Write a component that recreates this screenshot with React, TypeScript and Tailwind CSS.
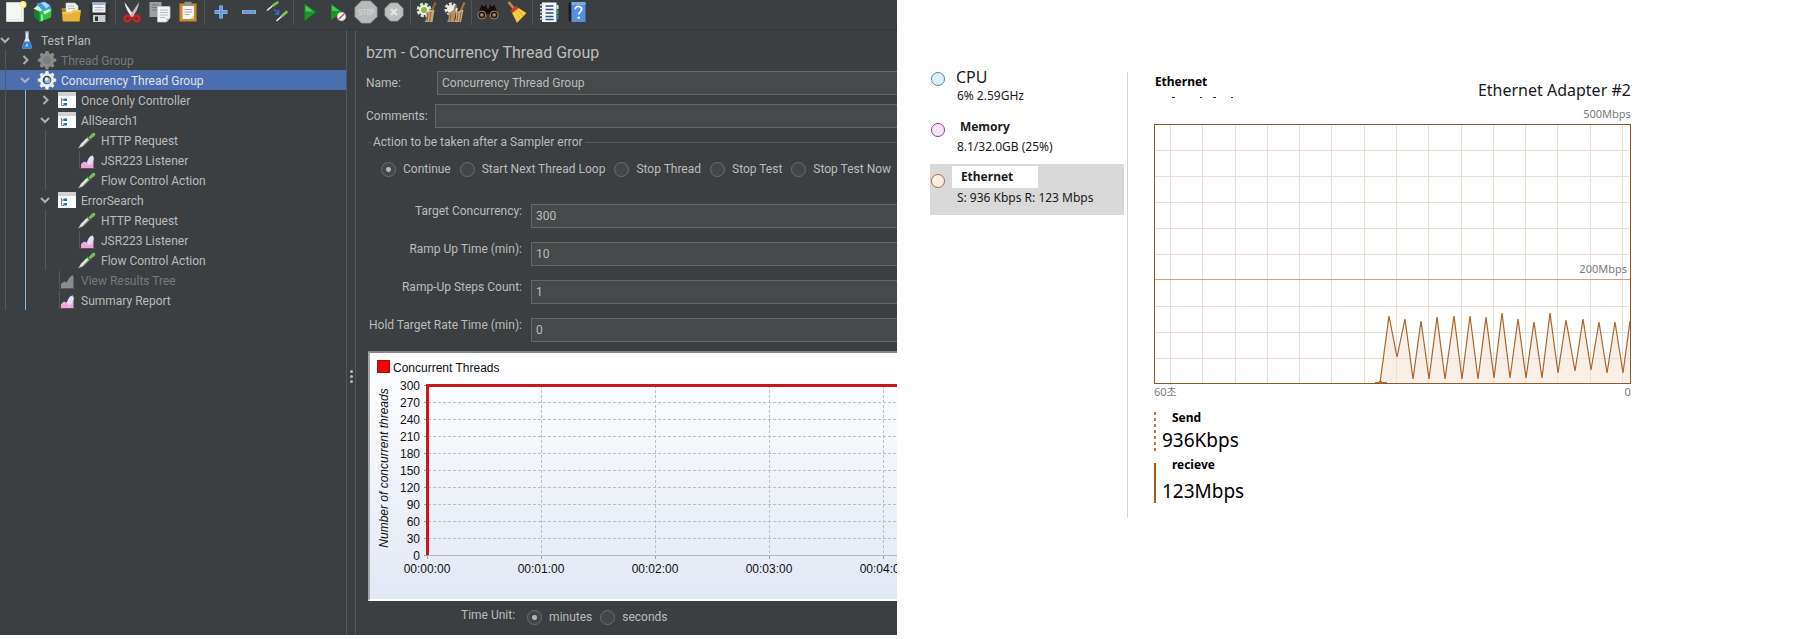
import type { ReactNode } from "react";

/* ---------- toolbar icons, all on a 24 x 24 grid ---------- */

function Icon({ children }: { children: ReactNode }) {
  return (
    <svg viewBox="0 0 24 24" className="h-6 w-6 shrink-0" aria-hidden="true">
      {children}
    </svg>
  );
}

const NewIcon = () => (
  <Icon>
    <path d="M3.500 2.500h17v19h-17z" fill="#f6f6f3" stroke="#d2d2cc" />
    <path d="M6 19.500h12.500V8" fill="none" stroke="#e4e4de" />
    <circle cx="20" cy="4.500" r="3.500" fill="#f3ee8a" />
    <circle cx="20" cy="4.500" r="1.600" fill="#fffde0" />
  </Icon>
);

const TemplatesIcon = () => (
  <Icon>
    <path d="M4.500 8.500 6 3.500 13 1.500l6 3.500 1.500 4L11 13z" fill="#3f9be0" />
    <path d="M10 3l4-1 4.500 3.500-3 3z" fill="#a5dcf8" />
    <path d="M2.500 8.500 8.500 11.500v10L3.500 18z" fill="#157f29" />
    <path d="M8.500 11.500 20.500 8l-.5 9.500-11.500 4.500z" fill="#2fc246" />
    <path d="M2.500 8.500 7 5.500l4.500 5-3 1z" fill="#d6f0da" />
    <path d="M12 11.500l6-2.500 2.500 1.500-7 4z" fill="#c8f5cf" />
    <path d="M11 14.500v6.500" stroke="#8cec98" strokeWidth="1.800" />
  </Icon>
);

const OpenIcon = () => (
  <Icon>
    <path d="M2.500 8h7l2 2H20v11H3.500z" fill="#b9801c" />
    <path d="M7 3h9l3 3v9H7z" fill="#f1f1ee" stroke="#c9c9c4" strokeWidth=".6" />
    <path d="M9 6h6M9 8.500h7" stroke="#a9a9a4" strokeWidth=".8" />
    <path d="M3 12h9l2-2h8l-1.500 11.500h-16.500z" fill="#e9b23c" />
    <path d="M4 13h8.500l2-2h6.500" fill="none" stroke="#f9dc85" strokeWidth=".9" />
  </Icon>
);

const SaveIcon = () => (
  <Icon>
    <path d="M2.500 4h19v16.500l-1 1.500H4L2.500 20.500z" fill="#303133" />
    <path d="M5.500 2.500h13v10h-13z" fill="#f0f2f4" />
    <path d="M5.500 2.500h13v2.500h-13z" fill="#9fb6cc" />
    <path d="M7.500 7.500h9M7.500 10h9" stroke="#b3b6ba" />
    <path d="M6 15h12.500v7H6z" fill="#c9cbce" />
    <path d="M8 16.500h3v4.500H8z" fill="#303133" />
  </Icon>
);

const CutIcon = () => (
  <Icon>
    <path d="M4.500 2 14 15.500l-2.500 1.500C8 12 5.500 8 4.500 2z" fill="#eceeef" />
    <path d="M19 2 10 15.500l2.500 1.500C16 12 18.500 8 19 2z" fill="#b9bdc0" />
    <ellipse cx="7.500" cy="18.500" rx="3" ry="2.700" fill="none" stroke="#d81f1f" strokeWidth="2.400" />
    <ellipse cx="16.500" cy="18.500" rx="3" ry="2.700" fill="none" stroke="#d81f1f" strokeWidth="2.400" />
  </Icon>
);

const CopyIcon = () => (
  <Icon>
    <path d="M1.500 2h12v15h-12z" fill="#9c9e9f" />
    <path d="M4 5h7M4 7.500h7M4 10h7" stroke="#77797a" />
    <path d="M9.500 6.500h12.500V18l-3.500 4h-9z" fill="#f2f3f3" stroke="#c4c6c7" strokeWidth=".7" />
    <path d="M12 10h8M12 12.500h8M12 15h8M12 17.500h5" stroke="#b3b6b8" strokeWidth=".9" />
    <path d="M18.500 22v-4H22z" fill="#c4c6c7" />
  </Icon>
);

const PasteIcon = () => (
  <Icon>
    <path d="M3.500 3.500h17v18h-17z" fill="#c58a32" stroke="#8f5f1a" strokeWidth=".8" />
    <path d="M6.500 6h11.500v13h-11.500z" fill="#f4f4f2" />
    <path d="M8.500 1.800h7V6h-7z" fill="#8f9294" />
    <path d="M8.500 9.500h7.500M8.500 12h7.500M8.500 14.500h5" stroke="#a9abad" />
    <path d="M14 19l4-4v4z" fill="#cfcfcc" />
  </Icon>
);

const PlusIcon = () => (
  <Icon>
    <path d="M12 5.500v13M5.500 12h13" stroke="#a9d0f7" strokeWidth="3.400" />
    <path d="M12 6v12M6 12h12" stroke="#5b9de6" strokeWidth="2" />
  </Icon>
);

const MinusIcon = () => (
  <Icon>
    <path d="M5 12h14" stroke="#a9d0f7" strokeWidth="3.400" />
    <path d="M5.500 12h13" stroke="#5b9de6" strokeWidth="2" />
  </Icon>
);

const ToggleIcon = () => (
  <Icon>
    <path d="M2.500 10 8 5.500" stroke="#f0f3ee" strokeWidth="1.600" strokeLinecap="round" />
    <path d="M8 5.500 12.500 2.500" stroke="#7fc45a" strokeWidth="2.600" strokeLinecap="round" />
    <path d="M12 20.500 17 16" stroke="#f0f3ee" strokeWidth="1.600" strokeLinecap="round" />
    <path d="M17 16l4.500-4" stroke="#7fc45a" strokeWidth="2.600" strokeLinecap="round" />
    <path d="M9 9l4 4M13.500 9.500V14H9.500" fill="none" stroke="#2f6fd0" strokeWidth="1.400" />
  </Icon>
);

const PlayIcon = () => (
  <Icon>
    <path d="M6.500 3.500 18 12 6.500 21z" fill="#1a9425" />
    <path d="M7.500 5.500 15.500 11.500H7.500z" fill="#45c94e" />
  </Icon>
);

const PlayNoPauseIcon = () => (
  <Icon>
    <path d="M5 3.500 16 12 5 20z" fill="#1a9425" />
    <path d="M6 5.500 13.500 11H6z" fill="#45c94e" />
    <circle cx="15.500" cy="16.500" r="4.300" fill="#f3efef" stroke="#bdb7b7" strokeWidth=".8" />
    <path d="M12.800 19l5.400-5" stroke="#c24848" strokeWidth="1.500" />
  </Icon>
);

const StopIcon = () => (
  <Icon>
    <path d="M7.500 1h9L23 7.500v9L16.500 23h-9L1 16.500v-9z" fill="#b9bbbb" stroke="#9fa1a1" strokeWidth=".8" />
    <path d="M5 9.500h3.200M5 9.500v2.500h3v2.500H5M10.500 9.500v5M9.300 9.500h2.600M13 9.500h2.700v5H13zM17.300 14.500v-5h2.200v2.700h-2.200" fill="none" stroke="#cfd1d1" />
  </Icon>
);

const ShutdownIcon = () => (
  <Icon>
    <path d="M8.500 3h7l5.500 5.500v7L15.500 21h-7L3 15.500v-7z" fill="#bdbfbf" stroke="#a4a6a6" strokeWidth=".8" />
    <path d="M9 9l6 6M15 9l-6 6" stroke="#e4e5e5" strokeWidth="2.200" />
  </Icon>
);

const ClearIcon = () => (
  <Icon>
    <circle cx="9" cy="10" r="5.800" fill="none" stroke="#d7e6c8" strokeWidth="3.200" strokeDasharray="3 1.550" />
    <circle cx="9" cy="10" r="5" fill="#eef3e6" />
    <circle cx="9" cy="10" r="3" fill="#86b84c" />
    <path d="M20.500 2.500 17 10" stroke="#9c6b35" strokeWidth="1.800" />
    <path d="M10.500 12c3 1 5-3.500 9-2l-2 12H9.500c3-3 2.500-6 1-10z" fill="#caa172" />
    <path d="M13 13l-1 8M16 12l-1.500 9.500" stroke="#8d653a" />
  </Icon>
);

const ClearAllIcon = () => (
  <Icon>
    <circle cx="8" cy="9" r="5" fill="none" stroke="#e3e3dc" strokeWidth="3.200" strokeDasharray="2.800 1.400" />
    <circle cx="8" cy="9" r="4" fill="#ecece4" />
    <path d="M21.500 2.500 18 10M13 5l-2 6" stroke="#a77a48" strokeWidth="1.800" />
    <path d="M5 12c3 1 5-3 8-1.500L11 22H4c2.500-3 2-7 1-10z" fill="#b98e60" />
    <path d="M12.500 12c3 1 4-3.500 8-2L18 22h-7c2.500-3 2.500-6 1.500-10z" fill="#cfa87a" />
    <path d="M15 13l-1 8M18 12l-1.500 9.500M8 14l-1 7" stroke="#8d653a" />
  </Icon>
);

const SearchIcon = () => (
  <Icon>
    <path d="M6 4h3.500l1.500 4.500h2L14.500 4H18l4.500 11h-9L12 13l-1.500 2h-9z" fill="#120f0c" />
    <path d="M6.500 5h2.500M15 5h2.500" stroke="#8a7a68" />
    <circle cx="5.800" cy="15" r="4" fill="#1f1a16" stroke="#c07a4a" />
    <circle cx="18.200" cy="15" r="4" fill="#1f1a16" stroke="#c07a4a" />
    <circle cx="5.800" cy="15" r="1.800" fill="#8a8f98" />
    <circle cx="18.200" cy="15" r="1.800" fill="#8a8f98" />
  </Icon>
);

const ResetSearchIcon = () => (
  <Icon>
    <path d="M4.500 2 10 8.500" stroke="#c08a4a" strokeWidth="2.600" />
    <path d="M6.500 10.500 12.500 5.500l2 2.500-6 5z" fill="#d9372a" />
    <path d="M8 13 14.500 8l8 5L13 23z" fill="#f2c22c" />
    <path d="M10.500 13l4 7M13 11.500l4.500 6M15.500 9.500l5 4.500" stroke="#fbe888" />
  </Icon>
);

const FunctionsIcon = () => (
  <Icon>
    <path d="M5 2.500h14.500V22H5z" fill="#f7f9fb" />
    <path d="M8.500 6h8M8.500 9.500h8M8.500 13h8M8.500 16.500h8M8.500 19.500h8" stroke="#2d4f86" strokeWidth="1.300" />
    <path d="M3 5h3.500M3 8.500h3.500M3 12h3.500M3 15.500h3.500M3 19h3.500" stroke="#d9dcdf" strokeWidth="1.400" />
    <path d="M19.500 5h2v4h-2z" fill="#d8e2ee" />
    <path d="M19.500 10h2v4h-2z" fill="#35a852" />
    <path d="M19.500 15h2v4h-2z" fill="#2c7fd4" />
  </Icon>
);

const HelpIcon = () => (
  <Icon>
    <path d="M3.500 3 6.500 2v20l-3-1z" fill="#16202e" />
    <path d="M6.500 2h14v20h-14z" fill="#5590dc" />
    <path d="M6.500 2h14v3h-14z" fill="#78abea" />
    <path d="M10.300 9.200c0-3.800 6.400-3.600 6.400 0 0 2.600-3 2.500-3 5.300" fill="none" stroke="#fff" strokeWidth="1.600" />
    <circle cx="13.700" cy="17.800" r="1.200" fill="#fff" />
  </Icon>
);

const TOOL_GROUPS: { label: string; icon: () => ReactNode }[][] = [
  [
    { label: "New", icon: NewIcon },
    { label: "Templates", icon: TemplatesIcon },
    { label: "Open", icon: OpenIcon },
    { label: "Save", icon: SaveIcon },
  ],
  [
    { label: "Cut", icon: CutIcon },
    { label: "Copy", icon: CopyIcon },
    { label: "Paste", icon: PasteIcon },
  ],
  [
    { label: "Expand all", icon: PlusIcon },
    { label: "Collapse all", icon: MinusIcon },
    { label: "Toggle", icon: ToggleIcon },
  ],
  [
    { label: "Start", icon: PlayIcon },
    { label: "Start no pauses", icon: PlayNoPauseIcon },
    { label: "Stop", icon: StopIcon },
    { label: "Shutdown", icon: ShutdownIcon },
  ],
  [
    { label: "Clear", icon: ClearIcon },
    { label: "Clear all", icon: ClearAllIcon },
  ],
  [
    { label: "Search", icon: SearchIcon },
    { label: "Reset search", icon: ResetSearchIcon },
  ],
  [
    { label: "Function helper", icon: FunctionsIcon },
    { label: "Help", icon: HelpIcon },
  ],
];

function Toolbar() {
  return (
    <div role="toolbar" className="flex h-[30px] items-start border-b border-[#35383a] pl-px">
      {TOOL_GROUPS.map((group, i) => (
        <div key={i} className="flex items-start">
          {i > 0 && <div className="mx-0.5 h-[25px] w-px bg-[#515456]" />}
          {group.map(({ label, icon: Glyph }) => (
            <button key={label} type="button" aria-label={label} className="flex h-6 w-7 items-center justify-center">
              <Glyph />
            </button>
          ))}
        </div>
      ))}
    </div>
  );
}

/* ---------- test plan tree ---------- */

type NodeKind = "plan" | "gearOff" | "gear" | "controller" | "sampler" | "listener" | "listenerOff";

const GEAR =
  "M7.600 0h2.800l.5 2.300 1.600.7 2-1.300 2 2-1.300 2 .7 1.600 2.300.5v2.800l-2.300.5-.7 1.600 1.300 2-2 2-2-1.300-1.600.7-.5 2.300H7.600l-.5-2.300-1.600-.7-2 1.300-2-2 1.300-2-.7-1.600L-.200 10.600V7.800l2.300-.5.7-1.600-1.300-2 2-2 2 1.300 1.600-.7z";

function TreeIcon({ kind }: { kind: NodeKind }) {
  return (
    <svg viewBox="0 0 18 18" className="h-[18px] w-[18px] shrink-0 overflow-visible" aria-hidden="true">
      {kind === "plan" && (
        <>
          <path d="M7.500 1h3v6l3.500 9c0 1-.5 1.500-1.500 1.500h-7C4.500 17.500 4 17 4 16l3.500-9z" fill="#dfe8f2" />
          <path d="M6.300 10.500h5.400L14 16c0 1-.5 1.500-1.500 1.500h-7C4.500 17.500 4 17 4 16z" fill="#2e7fd6" />
          <path d="M7 15.500l2-4 1.500 4z" fill="#9cc8f5" />
          <path d="M7 1h4" stroke="#9aa8b8" strokeWidth="1.500" />
        </>
      )}
      {kind === "gearOff" && (
        <>
          <path d={GEAR} fill="#8a8c8c" />
          <circle cx="9" cy="9" r="4" fill="#7c7e7e" />
        </>
      )}
      {kind === "gear" && (
        <>
          <path d={GEAR} fill="#eef0f2" />
          <circle cx="9" cy="9" r="4.300" fill="#33465f" />
          <circle cx="9.500" cy="9.500" r="3" fill="#8fb2de" />
          <circle cx="8.500" cy="8" r="1.700" fill="#e3eefb" />
        </>
      )}
      {kind === "controller" && (
        <>
          <path d="M0 1h18v16H0z" fill="#fbfcfd" />
          <path d="M0 1h18v4H0z" fill="#cfd1d3" />
          <path d="M3.500 7v7.500H6M3.500 9H6" fill="none" stroke="#6c8496" />
          <path d="M5.500 7.500h3.500v2.500H5.500zM5.500 12h3.500v2.500H5.500z" fill="#2c6f9c" />
        </>
      )}
      {kind === "sampler" && (
        <>
          <path d="M0 17.500 3 12.500 9.500 6l2.500 2.500L5 15.500z" fill="#aeb2ae" />
          <path d="M2.500 15 10 7.500" stroke="#f4f6f2" strokeWidth="1.400" />
          <path d="M9 5.500l3.500 3.500" stroke="#3f7a35" strokeWidth="1.800" />
          <path d="M10.500 6.500 14 2.500c1.500-1.800 4.500-.5 3 2L12.500 8z" fill="#7fb865" />
        </>
      )}
      {(kind === "listener" || kind === "listenerOff") && (
        <>
          <path d="M1.500 0v17.500H17" fill="none" stroke="#55585a" />
          <path
            d="M3 17v-4l3-2.500 2.500 1 3-5 3-2.500L15.500 6v11z"
            fill={kind === "listener" ? "#f0a8dc" : "#8b8d8d"}
          />
          {kind === "listener" && <ellipse cx="12.500" cy="9.500" rx="2.600" ry="4.600" transform="rotate(24 12.500 9.500)" fill="#d9e2f6" />}
        </>
      )}
    </svg>
  );
}

const TREE: { label: string; depth: number; kind: NodeKind; open?: boolean; selected?: boolean; off?: boolean }[] = [
  { label: "Test Plan", depth: 0, kind: "plan", open: true },
  { label: "Thread Group", depth: 1, kind: "gearOff", open: false, off: true },
  { label: "Concurrency Thread Group", depth: 1, kind: "gear", open: true, selected: true },
  { label: "Once Only Controller", depth: 2, kind: "controller", open: false },
  { label: "AllSearch1", depth: 2, kind: "controller", open: true },
  { label: "HTTP Request", depth: 3, kind: "sampler" },
  { label: "JSR223 Listener", depth: 3, kind: "listener" },
  { label: "Flow Control Action", depth: 3, kind: "sampler" },
  { label: "ErrorSearch", depth: 2, kind: "controller", open: true },
  { label: "HTTP Request", depth: 3, kind: "sampler" },
  { label: "JSR223 Listener", depth: 3, kind: "listener" },
  { label: "Flow Control Action", depth: 3, kind: "sampler" },
  { label: "View Results Tree", depth: 2, kind: "listenerOff", off: true },
  { label: "Summary Report", depth: 2, kind: "listener" },
];

function Tree() {
  return (
    <ul role="tree" className="w-[346px] shrink-0">
      {TREE.map((n, i) => (
        <li
          key={i}
          role="treeitem"
          aria-selected={!!n.selected}
          aria-expanded={n.open}
          className={`flex h-5 items-center ${n.selected ? "bg-[#4b6eaf] text-[#dfe3ea]" : n.off ? "text-[#77797a]" : "text-[#bbbbbb]"}`}
        >
          {Array.from({ length: n.depth }, (_, level) => (
            <span key={level} className="h-5 w-5 shrink-0 pl-[5px]">
              <span className={`block h-5 w-px ${level === 1 ? "bg-[#7ab8f0]" : "bg-[#55585a]"}`} />
            </span>
          ))}
          <svg viewBox="0 0 10 10" className="mr-2 h-2.5 w-2.5 shrink-0" aria-hidden="true">
            {n.open !== undefined && (
              <path d={n.open ? "M1 3l4 4 4-4" : "M3.500 1l4 4-4 4"} fill="none" stroke="#adb0b2" strokeWidth="2" />
            )}
          </svg>
          <TreeIcon kind={n.kind} />
          <span className="ml-[5px] whitespace-nowrap pt-0.5">{n.label}</span>
        </li>
      ))}
    </ul>
  );
}

/* ---------- thread group form ---------- */

const INPUT = "h-6 min-w-0 flex-1 border border-[#646869] border-r-0 bg-[#45494a] px-1 text-[#bbbbbb] outline-none";

function Radio({ name, label, checked }: { name: string; label: string; checked?: boolean }) {
  return (
    <label className="flex items-center gap-[7px] whitespace-nowrap">
      <input
        type="radio"
        name={name}
        defaultChecked={checked}
        className="h-[15px] w-[15px] appearance-none rounded-full border border-[#6a6e70] bg-[#43474a] checked:bg-[radial-gradient(circle,#b4b7b9_0_2px,#43474a_3px)]"
      />
      {label}
    </label>
  );
}

const FIELDS = [
  { id: "target", label: "Target Concurrency:", value: "300" },
  { id: "ramp", label: "Ramp Up Time (min):", value: "10" },
  { id: "steps", label: "Ramp-Up Steps Count:", value: "1" },
  { id: "hold", label: "Hold Target Rate Time (min):", value: "0" },
];

const PLOT = { left: 58, top: 32, rowStep: 17, colStep: 114, bottom: 202 };

function ConcurrencyChart() {
  const columns = ["00:00:00", "00:01:00", "00:02:00", "00:03:00", "00:04:00"];
  return (
    <div className="ml-0.5 mt-[9px] border-y-2 border-l-2 border-b-white border-l-[#a3a5a6] border-t-[#85888a] bg-linear-to-b from-white to-[#e2e8f4]">
      <svg className="block h-[246px] w-full font-['Liberation_Sans',sans-serif] text-xs" role="img" aria-label="Concurrent Threads">
        <rect x="7.500" y="7.500" width="12" height="12" fill="#ff0000" stroke="#a01010" />
        <text x="23" y="19" fill="#111">Concurrent Threads</text>
        <text x="18" y="115" textAnchor="middle" transform="rotate(-90 18 115)" fontStyle="italic" fill="#111">
          Number of concurrent threads
        </text>
        {Array.from({ length: 11 }, (_, i) => {
          const y = PLOT.top + i * PLOT.rowStep;
          return (
            <g key={i}>
              {i < 10 && <line x1={PLOT.left} x2="2400" y1={y + 0.5} y2={y + 0.5} stroke="#bcbfc4" strokeDasharray="3 2" />}
              <line x1={PLOT.left - 4} x2={PLOT.left} y1={y + 0.5} y2={y + 0.5} stroke="#9a9da2" />
              <text x="50" y={y + 5} textAnchor="end" fill="#111">{300 - i * 30}</text>
            </g>
          );
        })}
        {columns.map((label, i) => {
          const x = PLOT.left + i * PLOT.colStep;
          return (
            <g key={label}>
              <line x1={x - 0.5} x2={x - 0.5} y1={PLOT.top} y2={PLOT.bottom} stroke="#bcbfc4" strokeDasharray="3 2" />
              <line x1={x - 0.5} x2={x - 0.5} y1={PLOT.bottom} y2={PLOT.bottom + 4} stroke="#9a9da2" />
              <text x={x - 1} y="220" textAnchor="middle" fill="#111">{label}</text>
            </g>
          );
        })}
        <line x1={PLOT.left} x2="2400" y1={PLOT.bottom + 0.5} y2={PLOT.bottom + 0.5} stroke="#b4b7bc" />
        <polyline points="57.500,202 57.500,32.500 2400,32.500" fill="none" stroke="#c8171c" strokeWidth="3" />
      </svg>
    </div>
  );
}

function ThreadGroupForm() {
  return (
    <form className="min-w-0 flex-1 overflow-hidden pb-2 pl-2.5 pt-[11px]">
      <h1 className="h-6 text-base leading-6">bzm - Concurrency Thread Group</h1>
      <div className="mt-1.5 flex items-center">
        <label htmlFor="name" className="w-[71px]">Name:</label>
        <input id="name" className={INPUT} defaultValue="Concurrency Thread Group" />
      </div>
      <div className="mt-[9px] flex items-center">
        <label htmlFor="comments" className="w-[69px]">Comments:</label>
        <input id="comments" className={INPUT} defaultValue="" />
      </div>
      <fieldset className="ml-0.5 mt-[5px] border-t border-[#55585a]">
        <legend className="ml-[3px] px-0.5 leading-[18px]">Action to be taken after a Sampler error</legend>
        <div className="flex h-[26px] items-end gap-[9px] pl-[13px]">
          <Radio name="onError" label="Continue" checked />
          <Radio name="onError" label="Start Next Thread Loop" />
          <Radio name="onError" label="Stop Thread" />
          <Radio name="onError" label="Stop Test" />
          <Radio name="onError" label="Stop Test Now" />
        </div>
      </fieldset>
      <div className="mt-[27px] flex flex-col gap-3.5">
        {FIELDS.map((f) => (
          <div key={f.id} className="flex items-start gap-[9px]">
            <label htmlFor={f.id} className="w-[156px] whitespace-nowrap text-right leading-[14px]">{f.label}</label>
            <input id={f.id} className={INPUT} defaultValue={f.value} />
          </div>
        ))}
      </div>
      <ConcurrencyChart />
      <div className="mt-1.5 flex h-5 items-start pl-[95px]">
        <span className="leading-4">Time Unit:</span>
        <div className="ml-3 flex h-5 items-center gap-2">
          <Radio name="unit" label="minutes" checked />
          <Radio name="unit" label="seconds" />
        </div>
      </div>
    </form>
  );
}

function TestPlanWindow() {
  return (
    <section className="w-[49.8%] shrink-0 overflow-hidden bg-[#3c3f41] font-['Roboto','Noto_Sans',sans-serif] text-xs text-[#bbbbbb]">
      <Toolbar />
      <div className="flex">
        <Tree />
        <div className="flex w-2.5 shrink-0 flex-col items-center justify-center gap-0.5 border-x border-[#55585a] pt-[88px]">
          <span className="h-[3px] w-[3px] rounded-full bg-[#b5b7b8]" />
          <span className="h-[3px] w-[3px] rounded-full bg-[#b5b7b8]" />
          <span className="h-[3px] w-[3px] rounded-full bg-[#b5b7b8]" />
        </div>
        <ThreadGroupForm />
      </div>
    </section>
  );
}

/* ---------- performance monitor ---------- */

const WAVE: [number, number][] = [
  [226, 259], [235, 192], [243, 233], [251, 195], [259, 255], [267, 197], [275, 255], [283, 193], [291, 255],
  [300, 192], [308, 255], [316, 192], [324, 255], [332, 193], [340, 254], [348, 189], [356, 254], [364, 195],
  [372, 254], [380, 198], [388, 254], [396, 189], [404, 249], [412, 196], [421, 247], [429, 195], [437, 246],
  [445, 198], [453, 249], [461, 198], [469, 249], [476, 197],
];
const WAVE_POINTS = WAVE.map((p) => p.join(",")).join(" ");
const COLUMN_X = [16, 48, 81, 113, 145, 177, 210, 242, 274, 307, 339, 371, 403, 436, 468];
const ROW_Y = [26, 52, 78, 104, 130, 182, 208, 234];

function ThroughputChart() {
  return (
    <svg viewBox="0 0 477 260" className="block w-full font-['Noto_Sans',sans-serif] text-[11px]" role="img" aria-label="Ethernet throughput">
      {COLUMN_X.map((x) => (
        <line key={x} x1={x + 0.5} x2={x + 0.5} y1="1" y2="259" stroke="#e9ddd3" />
      ))}
      {ROW_Y.map((y) => (
        <line key={y} x1="1" x2="475" y1={y + 0.5} y2={y + 0.5} stroke="#e9ddd3" />
      ))}
      <line x1="1" x2="476" y1="155.500" y2="155.500" stroke="#c8a582" />
      <text x="473" y="149" textAnchor="end" fill="#7a7a7a">200Mbps</text>
      <polygon points={`226,259 ${WAVE_POINTS} 476,259`} fill="#f6dfd0" fillOpacity=".5" />
      <polyline points={WAVE_POINTS} fill="none" stroke="#a8642c" strokeWidth="1.200" />
      <path d="M221 258.500h12M225 257.500h3" stroke="#d9622b" />
      <rect x=".5" y=".5" width="476" height="259" fill="none" stroke="#8a5a28" />
    </svg>
  );
}

const RESOURCES = [
  { name: "CPU", detail: "6% 2.59GHz", dot: "border-[#3b8dc0] bg-[#e0f0fb]", title: "pl-1 pt-1 text-base", row: "" },
  { name: "Memory", detail: "8.1/32.0GB (25%)", dot: "border-[#9038a8] bg-[#f8e8fb]", title: "pl-2 pt-0.5 font-bold", row: "" },
  { name: "Ethernet", detail: "S: 936 Kbps R: 123 Mbps", dot: "border-[#b0693a] bg-[#fdeee2]", title: "bg-white pl-[9px] font-bold", row: "bg-[#d9d9d9]" },
];

function ResourceList() {
  return (
    <nav aria-label="Resources" className="w-[194px] shrink-0 pt-[62px]">
      {RESOURCES.map((r) => (
        <a key={r.name} href="#" className={`flex h-[51px] items-start pl-px ${r.row}`}>
          <span className={`mr-[7px] mt-2.5 h-3.5 w-3.5 shrink-0 rounded-full border ${r.dot}`} />
          <span className="pt-0.5">
            <span className={`flex h-[22px] w-[86px] items-center ${r.title}`}>{r.name}</span>
            <span className="mt-0.5 block whitespace-nowrap pl-[5px] leading-4">{r.detail}</span>
          </span>
        </a>
      ))}
    </nav>
  );
}

function PerformanceMonitor() {
  return (
    <section className="flex min-w-0 flex-1 items-start bg-white pl-[33px] font-['Noto_Sans','Noto_Sans_CJK_KR',sans-serif] text-xs text-[#1a1a1a]">
      <ResourceList />
      <div className="ml-[3px] mt-[72px] max-w-[504px] flex-1 border-l border-[#d5d5d5] pb-[13px] pl-[26px]">
        <header className="flex h-8 items-start justify-between">
          <div className="pl-px">
            <h2 className="font-bold leading-5 text-black">Ethernet</h2>
            <svg viewBox="0 0 80 8" className="h-2 w-20" aria-hidden="true">
              <path d="M17 5.500h3M45 5.500h2M58 5.500h3M76 5.500h2" stroke="#333" />
            </svg>
          </div>
          <p className="pt-1.5 text-base leading-6">Ethernet Adapter #2</p>
        </header>
        <p className="pb-px text-right text-[11px] leading-[19px] text-[#7a7a7a]">500Mbps</p>
        <ThroughputChart />
        <div className="flex justify-between text-[11px] leading-4 text-[#7a7a7a]">
          <span>60초</span>
          <span>0</span>
        </div>
        <dl className="mt-2.5 text-black">
          <div className="flex gap-1.5">
            <div className="mb-[3px] mt-0.5 w-0.5 bg-[repeating-linear-gradient(#c8704a_0_3px,transparent_3px_6px)]" />
            <div>
              <dt className="pl-2.5 font-bold leading-4">Send</dt>
              <dd className="text-[19px] leading-7">936Kbps</dd>
            </div>
          </div>
          <div className="mt-[3px] flex gap-1.5">
            <div className="mb-0.5 mt-1.5 w-0.5 bg-[#a5591c]" />
            <div>
              <dt className="pl-2.5 font-bold leading-4">recieve</dt>
              <dd className="mt-1 text-[19px] leading-7">123Mbps</dd>
            </div>
          </div>
        </dl>
      </div>
    </section>
  );
}

export default function App() {
  return (
    <main className="flex items-start overflow-hidden bg-white">
      <TestPlanWindow />
      <PerformanceMonitor />
    </main>
  );
}
